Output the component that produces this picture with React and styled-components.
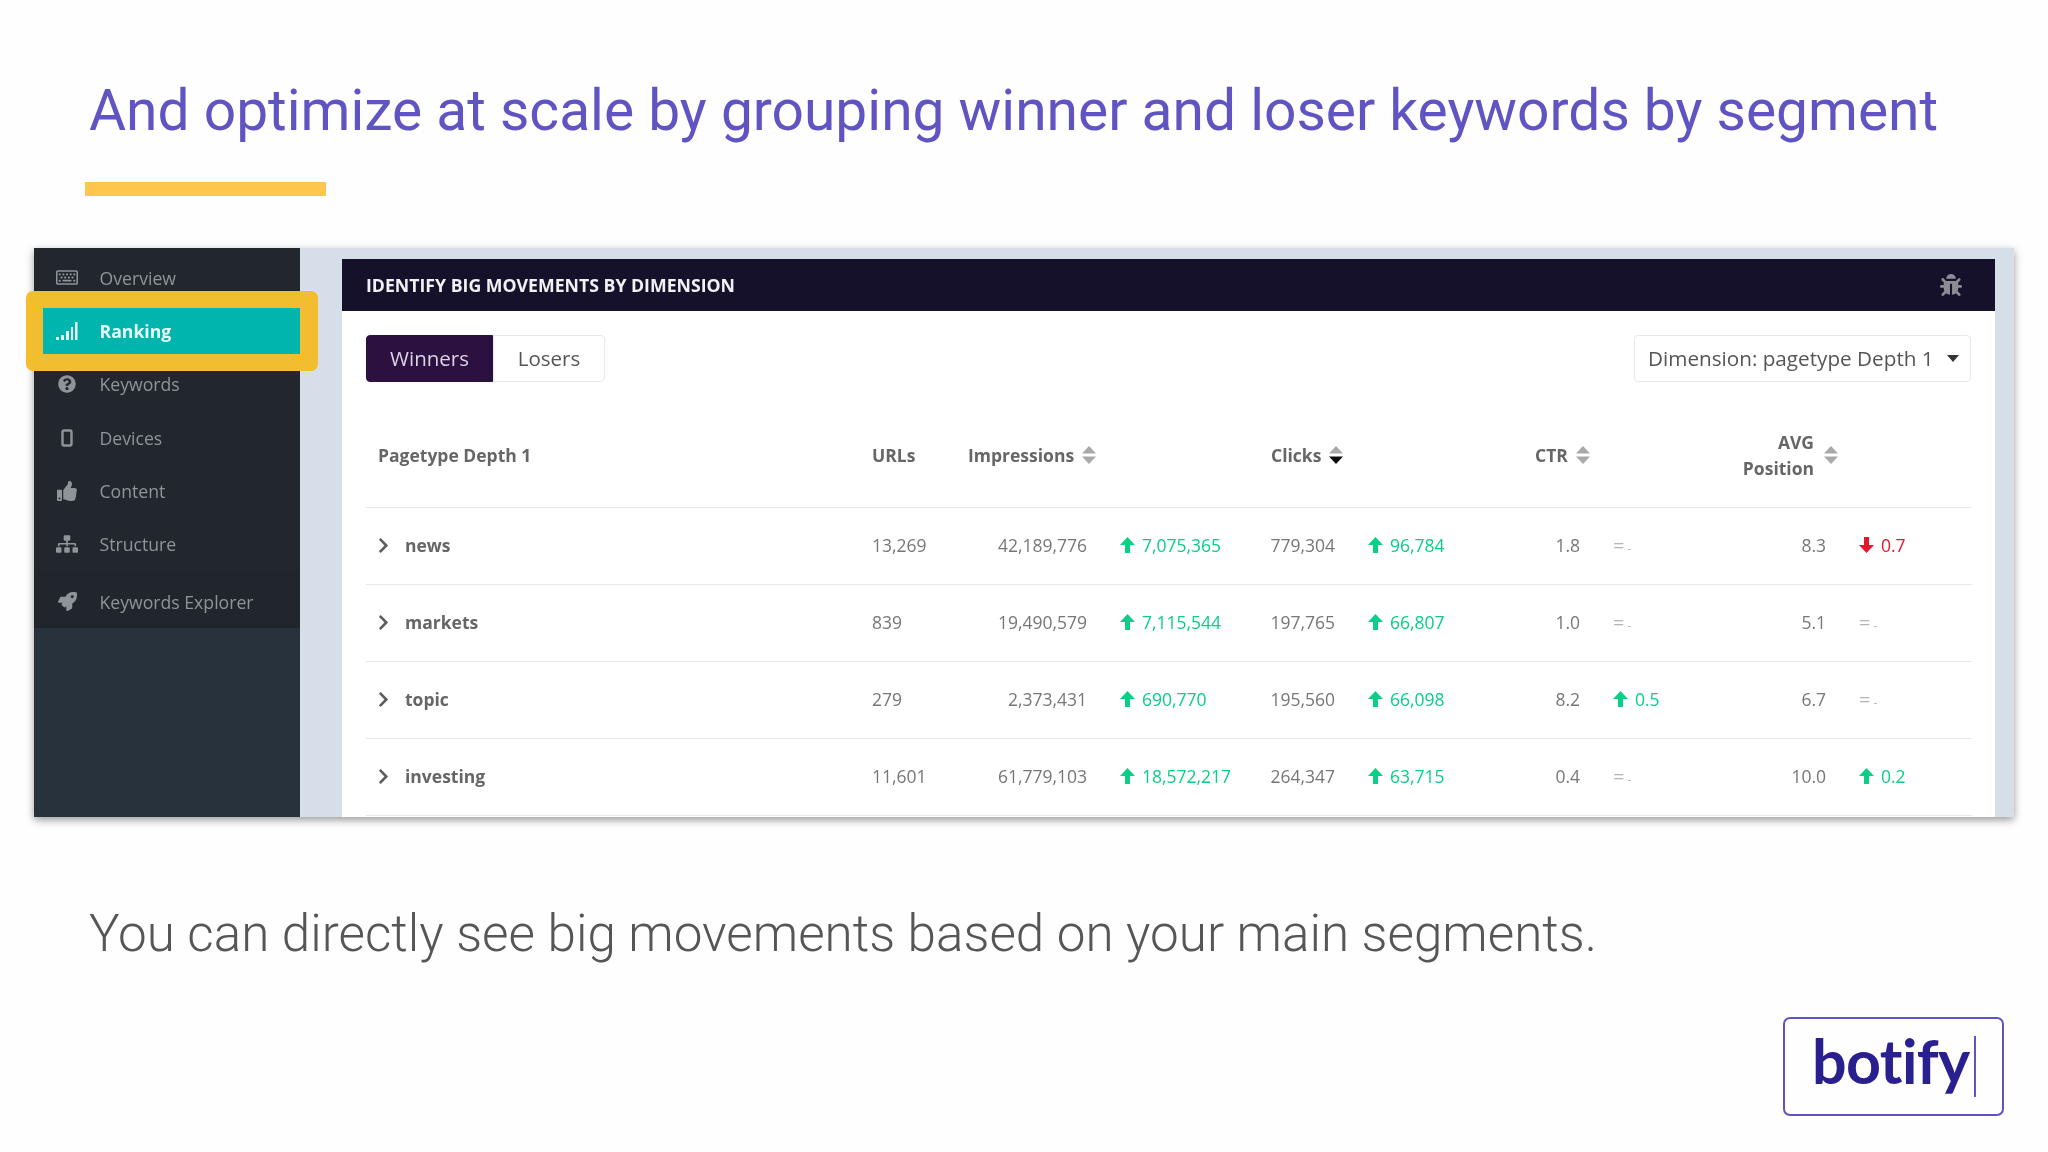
import React from 'react'
import styled, { createGlobalStyle } from 'styled-components'
import {
  FaRegKeyboard,
  FaQuestionCircle,
  FaThumbsUp,
  FaSitemap,
  FaRocket,
  FaBug,
  FaChevronRight,
} from 'react-icons/fa'

const GlobalStyle = createGlobalStyle`
  html, body {
    margin: 0;
    padding: 0;
    background: #fefefe;
  }
`

const RankingIcon = () => (
  <svg width="22" height="18" viewBox="0 0 22 18" fill="currentColor">
    <rect x="0" y="15" width="3" height="3" />
    <rect x="5" y="13" width="3" height="5" />
    <rect x="10" y="9" width="3" height="9" />
    <rect x="15" y="5" width="2" height="13" />
    <rect x="19" y="0" width="2.5" height="18" />
  </svg>
)

const DeviceIcon = () => (
  <svg width="12" height="18" viewBox="0 0 12 18" fill="none" stroke="currentColor" strokeWidth="2.4">
    <rect x="1.5" y="1.5" width="9" height="15" rx="1.5" />
  </svg>
)

const SortIcon = ({ active }) => (
  <svg width="14" height="18" viewBox="0 0 14 18">
    <path d="M7 0 L14 7.5 L0 7.5 Z" fill="#a9a9a9" />
    <path d="M7 18 L14 10.5 L0 10.5 Z" fill={active ? '#0c0c0c' : '#a9a9a9'} />
  </svg>
)

const ArrowIcon = ({ down }) => (
  <svg width="15" height="16" viewBox="0 0 15 16" fill="currentColor">
    <path d={down ? 'M7.5 16 L0 8 L5 8 L5 0 L10 0 L10 8 L15 8 Z' : 'M7.5 0 L15 8 L10 8 L10 16 L5 16 L5 8 L0 8 Z'} />
  </svg>
)

const navItems = [
  { label: 'Overview', icon: <FaRegKeyboard size={23} /> },
  { label: 'Ranking', icon: <RankingIcon />, active: true },
  { label: 'Keywords', icon: <FaQuestionCircle size={18} /> },
  { label: 'Devices', icon: <DeviceIcon /> },
  { label: 'Content', icon: <FaThumbsUp size={20} /> },
  { label: 'Structure', icon: <FaSitemap size={22} /> },
]

const rows = [
  {
    name: 'news', urls: '13,269', imp: '42,189,776', impD: '7,075,365',
    clicks: '779,304', clicksD: '96,784', ctr: '1.8', ctrD: null, pos: '8.3', posD: { dir: 'down', value: '0.7' },
  },
  {
    name: 'markets', urls: '839', imp: '19,490,579', impD: '7,115,544',
    clicks: '197,765', clicksD: '66,807', ctr: '1.0', ctrD: null, pos: '5.1', posD: null,
  },
  {
    name: 'topic', urls: '279', imp: '2,373,431', impD: '690,770',
    clicks: '195,560', clicksD: '66,098', ctr: '8.2', ctrD: { dir: 'up', value: '0.5' }, pos: '6.7', posD: null,
  },
  {
    name: 'investing', urls: '11,601', imp: '61,779,103', impD: '18,572,217',
    clicks: '264,347', clicksD: '63,715', ctr: '0.4', ctrD: null, pos: '10.0', posD: { dir: 'up', value: '0.2' },
  },
]

const Delta = ({ data }) => {
  if (!data) {
    return (
      <DeltaCell>
        <Flat>=<FlatDash>-</FlatDash></Flat>
      </DeltaCell>
    )
  }
  return (
    <DeltaCell>
      <Change $down={data.dir === 'down'}>
        <ArrowIcon down={data.dir === 'down'} />
        {data.value}
      </Change>
    </DeltaCell>
  )
}

const App = () => {
  return (
    <Slide>
      <GlobalStyle />
      <Title>And optimize at scale by grouping winner and loser keywords by segment</Title>
      <Accent />

      <Shot>
        <Sidebar>
          <NavList>
            {navItems.map((item) => (
              <NavItem key={item.label} $active={item.active}>
                <NavIcon>{item.icon}</NavIcon>
                {item.label}
              </NavItem>
            ))}
          </NavList>
          <NavBand>
            <NavIcon><FaRocket size={19} /></NavIcon>
            Keywords Explorer
          </NavBand>
        </Sidebar>

        <Main>
          <Panel>
            <PanelHeader>
              <PanelTitle>IDENTIFY BIG MOVEMENTS BY DIMENSION</PanelTitle>
              <FaBug size={22} color="#8c8c94" />
            </PanelHeader>
            <PanelBody>
              <Controls>
                <Toggle>
                  <ToggleButton $on>Winners</ToggleButton>
                  <ToggleButton>Losers</ToggleButton>
                </Toggle>
                <Dropdown>
                  Dimension: pagetype Depth 1
                  <Caret />
                </Dropdown>
              </Controls>

              <HeadRow>
                <HeadCell $pad={12}>Pagetype Depth 1</HeadCell>
                <HeadCell>URLs</HeadCell>
                <HeadCell $span={2}>Impressions <SortIcon /></HeadCell>
                <HeadCell $span={2} $pad={2}>Clicks <SortIcon active /></HeadCell>
                <HeadCell $span={2} $pad={35}>CTR <SortIcon /></HeadCell>
                <HeadCell $span={2}>
                  <AvgLabel>AVG<br />Position</AvgLabel>
                  <SortIcon />
                </HeadCell>
              </HeadRow>

              {rows.map((row) => (
                <Row key={row.name}>
                  <NameCell>
                    <FaChevronRight size={17} color="#5c5c5c" />
                    {row.name}
                  </NameCell>
                  <Cell>{row.urls}</Cell>
                  <NumCell>{row.imp}</NumCell>
                  <Delta data={{ dir: 'up', value: row.impD }} />
                  <NumCell>{row.clicks}</NumCell>
                  <Delta data={{ dir: 'up', value: row.clicksD }} />
                  <NumCell>{row.ctr}</NumCell>
                  <Delta data={row.ctrD} />
                  <NumCell>{row.pos}</NumCell>
                  <Delta data={row.posD} />
                </Row>
              ))}
            </PanelBody>
          </Panel>
        </Main>
      </Shot>

      <Caption>You can directly see big movements based on your main segments.</Caption>

      <LogoRow>
        <LogoBox>
          <LogoText>botify</LogoText>
          <LogoCursor />
        </LogoBox>
      </LogoRow>
    </Slide>
  )
}

export default App

const columns = '506px 96px 119px 182px 66px 165px 80px 150px 96px 146px'

const Slide = styled.div`
  width: 2048px;
  height: 1152px;
  overflow: hidden;
  display: flex;
  flex-direction: column;
  background: #fefefe;
  font-family: "Open Sans", sans-serif;
`

const Title = styled.h1`
  margin: 77px 0 0 89px;
  font-family: Roboto, sans-serif;
  font-weight: 400;
  font-size: 56.9px;
  line-height: 68px;
  color: #5f54c2;
  white-space: nowrap;
`

const Accent = styled.div`
  width: 241px;
  height: 14px;
  margin: 37px 0 0 85px;
  background: #ffc64d;
`

const Shot = styled.div`
  display: flex;
  width: 1980px;
  height: 569px;
  margin: 52px 0 0 34px;
  box-shadow: 0 3px 8px rgba(0, 0, 0, 0.4);
  filter: blur(0.45px);
`

const Sidebar = styled.div`
  width: 266px;
  flex-shrink: 0;
  display: flex;
  flex-direction: column;
  background: #27323d;
  color: #8f9499;
  font-size: 17.65px;
`

const NavList = styled.div`
  background: #22272e;
  padding: 3px 0 1px;
`

const NavItem = styled.div`
  position: relative;
  display: flex;
  align-items: center;
  height: ${(props) => (props.$active ? '46px' : '53.33px')};
  margin: ${(props) => (props.$active ? '3.67px 0 3.67px 9px' : '0')};
  padding-left: ${(props) => (props.$active ? '13px' : '22px')};
  background: ${(props) => (props.$active ? '#00b5ad' : 'transparent')};
  color: ${(props) => (props.$active ? '#e6fbfa' : 'inherit')};
  font-weight: ${(props) => (props.$active ? 700 : 400)};

  ${(props) =>
    props.$active &&
    `&::before {
      content: "";
      position: absolute;
      top: -17px;
      right: -18px;
      bottom: -17px;
      left: -17px;
      border: solid #f2bd2f;
      border-width: 17px 18px 17px 17px;
      border-radius: 7px;
    }`}
`

const NavIcon = styled.span`
  width: 22px;
  margin-right: 21.5px;
  display: flex;
  justify-content: center;
  flex-shrink: 0;
`

const NavBand = styled.div`
  display: flex;
  align-items: center;
  box-sizing: border-box;
  height: 56px;
  padding: 4px 0 0 22px;
  background: #20262c;
`

const Main = styled.div`
  flex: 1;
  min-width: 0;
  background: #d6deea;
  padding: 11px 19px 0 42px;
  display: flex;
`

const Panel = styled.div`
  flex: 1;
  min-width: 0;
  background: #fff;
  display: flex;
  flex-direction: column;
`

const PanelHeader = styled.div`
  height: 52px;
  flex-shrink: 0;
  padding: 0 33px 0 24px;
  display: flex;
  align-items: center;
  justify-content: space-between;
  background: #15112b;
`

const PanelTitle = styled.div`
  font-size: 17.7px;
  font-weight: 700;
  color: #f2f2f5;
`

const PanelBody = styled.div`
  padding: 24px 23px 0 24px;
  color: #777;
  font-size: 17.5px;
`

const Controls = styled.div`
  display: flex;
  justify-content: space-between;
  padding-right: 1px;
`

const Toggle = styled.div`
  display: flex;
  height: 47px;
`

const ToggleButton = styled.div`
  display: flex;
  align-items: center;
  justify-content: center;
  box-sizing: border-box;
  width: ${(props) => (props.$on ? '127px' : '112px')};
  padding-bottom: 2px;
  font-size: 20.5px;
  background: ${(props) => (props.$on ? '#2c1040' : '#fff')};
  color: ${(props) => (props.$on ? '#dcd3e4' : '#555')};
  border: 1px solid ${(props) => (props.$on ? '#2c1040' : '#e8e8ec')};
  border-radius: ${(props) => (props.$on ? '4px 0 0 4px' : '0 4px 4px 0')};
`

const Dropdown = styled.div`
  display: flex;
  align-items: center;
  box-sizing: border-box;
  width: 337px;
  height: 47px;
  padding: 0 0 2px 13px;
  font-size: 20.7px;
  color: #555;
  border: 1px solid #e8e8ec;
  border-radius: 4px;
  white-space: nowrap;
`

const Caret = styled.span`
  margin: 2px 0 0 13px;
  border-left: 6px solid transparent;
  border-right: 6px solid transparent;
  border-top: 7px solid #333;
`

const HeadRow = styled.div`
  display: grid;
  grid-template-columns: ${columns};
  align-items: center;
  height: 125px;
  padding-top: 20px;
  border-bottom: 1px solid #e6e7ea;
  box-sizing: border-box;
  margin-top: 1px;
  color: #666;
  font-weight: 700;
`

const HeadCell = styled.div`
  display: flex;
  align-items: center;
  gap: 8px;
  white-space: nowrap;
  padding-left: ${(props) => props.$pad || 0}px;
  ${(props) => props.$span && `grid-column: span ${props.$span};`}
`

const AvgLabel = styled.div`
  width: 84px;
  margin-right: 2px;
  text-align: right;
  line-height: 26px;
`

const Row = styled.div`
  display: grid;
  grid-template-columns: ${columns};
  align-items: center;
  height: 77px;
  padding-bottom: 2px;
  box-sizing: border-box;
  border-bottom: 1px solid #e8e9ec;
`

const Cell = styled.div`
  white-space: nowrap;
`

const NumCell = styled(Cell)`
  text-align: right;
`

const NameCell = styled(Cell)`
  display: flex;
  align-items: center;
  gap: 13px;
  padding-left: 9px;
  font-weight: 700;
  color: #666;
`

const DeltaCell = styled(Cell)`
  padding: 1px 0 0 33px;
`

const Change = styled.span`
  display: inline-flex;
  align-items: center;
  gap: 7px;
  color: ${(props) => (props.$down ? '#e5142f' : '#0bcf86')};
`

const Flat = styled.span`
  color: #b5b5b5;
  font-size: 20px;
`

const FlatDash = styled.span`
  margin-left: 3px;
  font-size: 12px;
`

const Caption = styled.p`
  margin: 85px 0 0 89px;
  font-family: Roboto, sans-serif;
  font-weight: 300;
  font-size: 51.2px;
  line-height: 64px;
  color: #565656;
  white-space: nowrap;
`

const LogoRow = styled.div`
  display: flex;
  justify-content: flex-end;
  padding-right: 44px;
  margin-top: 51px;
`

const LogoBox = styled.div`
  box-sizing: border-box;
  width: 221px;
  height: 99px;
  border: 2px solid #5f54c2;
  border-radius: 7px;
  padding-left: 27px;
  display: flex;
  align-items: center;
`

const LogoText = styled.span`
  font-family: Lato, sans-serif;
  font-weight: 700;
  font-size: 61px;
  line-height: 1;
  letter-spacing: -0.6px;
  padding-bottom: 12px;
  color: #2a1f8e;
`

const LogoCursor = styled.span`
  width: 2px;
  height: 61px;
  margin-left: 4px;
  background: #5f54c2;
`
